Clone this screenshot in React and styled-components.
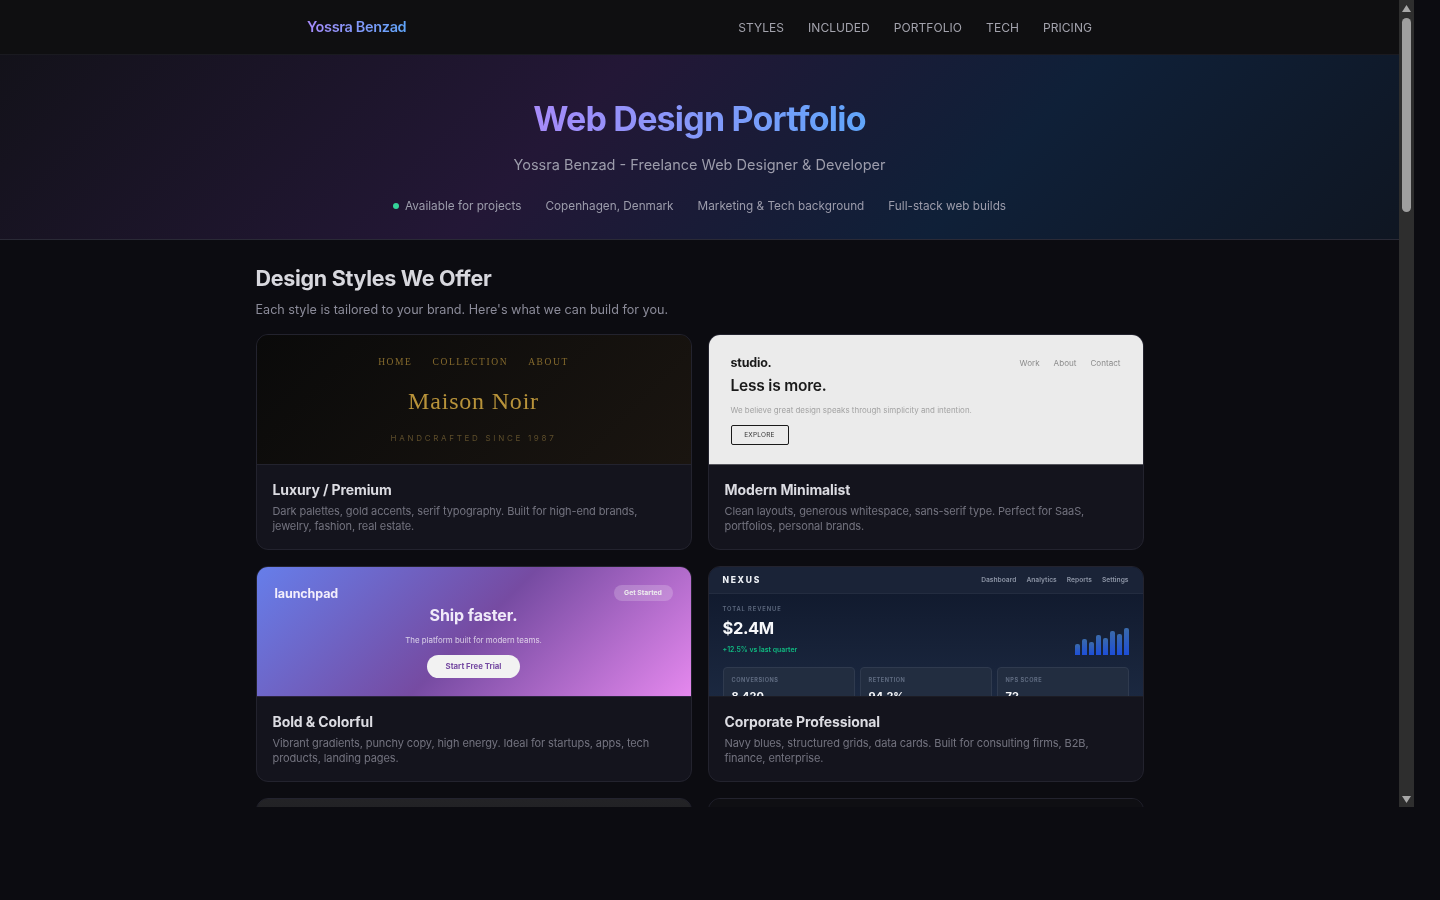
import React from "react";
import styled, { createGlobalStyle } from "styled-components";

const Global = createGlobalStyle`
  html, body { margin: 0; padding: 0; background: #0c0c11; height: 100%; overflow: hidden; }
  * { box-sizing: border-box; }
  body { font-family: "Inter", "Noto Sans", sans-serif; }
`;

const Frame = styled.div`
  width: 1414px;
  height: 807px;
  display: flex;
  background: #0c0c11;
`;
const Page = styled.div`
  flex: 1;
  min-width: 0;
  overflow: hidden;
  filter: blur(0.3px);
`;
const Scrollbar = styled.aside`
  width: 15px;
  display: flex;
  flex-direction: column;
  background: #2e2e2e;
`;
const ScrollArrow = styled.svg`
  display: block;
  width: 15px;
  height: 15px;
  flex: none;
  fill: #a8a8a8;
`;
const ScrollTrack = styled.div`
  flex: 1;
  padding: 3px 3px 0;
`;
const ScrollThumb = styled.div`
  height: 194px;
  border-radius: 5px;
  background: #9f9f9f;
`;

const Nav = styled.nav`
  height: 55px;
  background: #0f0f11;
  border-bottom: 1px solid #1a1a20;
  display: flex;
  justify-content: center;
`;
const NavInner = styled.div`
  width: 785px;
  display: flex;
  align-items: center;
  justify-content: space-between;
`;
const Logo = styled.span`
  margin-bottom: 2px;
  font-size: 14.5px;
  font-weight: 600;
  letter-spacing: -0.35px;
  background: linear-gradient(90deg, #a78bfa, #60a5fa);
  -webkit-background-clip: text;
  background-clip: text;
  color: transparent;
`;
const NavLinks = styled.div`
  display: flex;
  gap: 24px;
`;
const NavLink = styled.a`
  font-size: 12px;
  letter-spacing: 0.06px;
  color: #a3a3ad;
  text-transform: uppercase;
`;

const Hero = styled.header`
  height: 185px;
  padding-top: 43px;
  text-align: center;
  border-bottom: 1px solid #2a2a36;
  background: linear-gradient(135deg, #13121a 0%, #231736 40%, #0f2038 70%, #0f1622 100%);
`;
const Title = styled.h1`
  margin: 0;
  display: inline-block;
  font-size: 34px;
  line-height: 42px;
  font-weight: 700;
  letter-spacing: -0.8px;
  background: linear-gradient(90deg, #a78bfa, #60a5fa);
  -webkit-background-clip: text;
  background-clip: text;
  color: transparent;
`;
const Sub = styled.p`
  margin: 15px 0 0;
  font-size: 14.5px;
  line-height: 20px;
  color: #9c9cab;
`;
const Badges = styled.div`
  margin-top: 22px;
  display: flex;
  justify-content: center;
  gap: 24px;
`;
const Badge = styled.span`
  display: flex;
  align-items: center;
  gap: 6px;
  font-size: 11.75px;
  line-height: 18px;
  color: #9c9cab;
`;
const Dot = styled.i`
  width: 6px;
  height: 6px;
  border-radius: 50%;
  background: #34d399;
`;

const Main = styled.main`
  width: 888px;
  margin: 0 auto;
  padding: 23px 0 40px;
`;
const H2 = styled.h2`
  margin: 0;
  font-size: 21.5px;
  line-height: 30px;
  font-weight: 700;
  letter-spacing: -0.3px;
  color: #d8d8de;
`;
const Lead = styled.p`
  margin: 7px 0 14px;
  font-size: 12.6px;
  line-height: 20px;
  color: #8b8b99;
`;
const Grid = styled.div`
  display: grid;
  grid-template-columns: 1fr 1fr;
  gap: 16px;
`;
const Card = styled.article`
  height: 216px;
  border: 1px solid #23232e;
  border-radius: 12px;
  overflow: hidden;
  background: #14141d;
`;
const Preview = styled.div`
  height: 130px;
  overflow: hidden;
  border-bottom: 1px solid #23232e;
`;
const Info = styled.div`
  padding: 15px 15px 0 16px;
`;
const CardTitle = styled.h3`
  margin: 0;
  font-size: 14px;
  line-height: 20px;
  font-weight: 700;
  letter-spacing: -0.1px;
  color: #dcdce2;
`;
const CardDesc = styled.p`
  margin: 4px 0 0;
  font-size: 11px;
  line-height: 15px;
  letter-spacing: -0.11px;
  color: #73737f;
`;

/* Luxury */
const LuxPreview = styled(Preview)`
  background: linear-gradient(135deg, #0a0a0a, #1a1510);
  text-align: center;
  padding-top: 20px;
  font-family: "Liberation Serif", "DejaVu Serif", serif;
`;
const LuxNav = styled.div`
  display: flex;
  justify-content: center;
  gap: 20px;
  font-size: 9.5px;
  line-height: 14px;
  letter-spacing: 1.6px;
  color: #856a2d;
`;
const LuxTitle = styled.div`
  margin-top: 16px;
  font-size: 24px;
  line-height: 32px;
  letter-spacing: 0.8px;
  color: #b8933a;
`;
const LuxTag = styled.div`
  margin-top: 15px;
  font-family: "Inter", sans-serif;
  font-size: 8px;
  line-height: 12px;
  letter-spacing: 2.7px;
  color: #5e4e2b;
`;

/* Minimal */
const MinPreview = styled(Preview)`
  background: #ebebeb;
  padding: 20px 22px 0 22px;
  border-bottom-color: #55555c;
`;
const MinHead = styled.div`
  display: flex;
  justify-content: space-between;
  align-items: center;
`;
const MinLogo = styled.span`
  font-size: 12.5px;
  line-height: 16px;
  font-weight: 700;
  letter-spacing: -0.2px;
  color: #1a1a1a;
`;
const MinLinks = styled.span`
  display: flex;
  gap: 14px;
  font-size: 8.1px;
  color: #8c8c8c;
`;
const MinTitle = styled.div`
  margin-top: 5px;
  font-size: 15.5px;
  line-height: 20px;
  font-weight: 600;
  letter-spacing: -0.2px;
  color: #1a1a1a;
`;
const MinText = styled.p`
  margin: 8px 0 0;
  font-size: 7.95px;
  line-height: 12px;
  color: #a3a3a3;
`;
const MinBtn = styled.span`
  margin: 9px 0 0 0;
  display: flex;
  align-items: center;
  justify-content: center;
  width: 58px;
  height: 20px;
  border: 1.5px solid #1a1a1a;
  border-radius: 2px;
  font-size: 6.5px;
  letter-spacing: 0.2px;
  color: #333;
`;

/* Bold */
const BoldPreview = styled(Preview)`
  background: linear-gradient(135deg, #667eea 0%, #764ba2 50%, #e588ee 100%);
  padding: 18px 18px 0 18px;
  text-align: center;
  color: #fff;
  border-bottom-color: #2d2440;
`;
const BoldHead = styled.div`
  display: flex;
  justify-content: space-between;
  align-items: center;
`;
const BoldLogo = styled.span`
  font-size: 12.5px;
  font-weight: 700;
  letter-spacing: -0.1px;
  color: #f3eefc;
`;
const Pill = styled.span`
  width: 59px;
  height: 16px;
  border-radius: 8px;
  background: rgba(255, 255, 255, 0.2);
  font-size: 6.8px;
  line-height: 16px;
  font-weight: 700;
  color: #eee;
`;
const BoldTitle = styled.div`
  margin-top: 3px;
  font-size: 16px;
  line-height: 22px;
  font-weight: 700;
  letter-spacing: -0.1px;
  color: #f0eaf9;
`;
const BoldText = styled.p`
  margin: 8px 0 0;
  font-size: 7.9px;
  line-height: 12px;
  color: rgba(255, 255, 255, 0.72);
`;
const BoldBtn = styled.span`
  margin-top: 9px;
  display: inline-block;
  width: 93px;
  height: 23px;
  line-height: 23px;
  border-radius: 12px;
  background: #f2f2f2;
  font-size: 7.8px;
  font-weight: 700;
  color: #764ba2;
`;

/* Corporate */
const CorpPreview = styled(Preview)`
  background: linear-gradient(180deg, #0f172a, #1b2840);
  border-bottom-color: #1c1c24;
`;
const CorpBar = styled.div`
  height: 27px;
  padding: 0 14px;
  display: flex;
  align-items: center;
  justify-content: space-between;
  background: #1a2337;
  border-bottom: 1px solid #232c40;
`;
const CorpLogo = styled.span`
  font-size: 8.5px;
  font-weight: 800;
  letter-spacing: 1.7px;
  color: #eef1f6;
`;
const CorpLinks = styled.span`
  display: flex;
  gap: 10px;
  font-size: 6.7px;
  font-weight: 600;
  color: #8b93a4;
`;
const CorpBody = styled.div`
  padding: 10px 14px 0;
`;
const CorpRow = styled.div`
  display: flex;
  justify-content: space-between;
  align-items: flex-end;
`;
const CorpLabel = styled.div`
  font-size: 5.8px;
  line-height: 9px;
  font-weight: 600;
  letter-spacing: 0.9px;
  color: #5f6b80;
`;
const CorpValue = styled.div`
  margin-top: 3px;
  font-size: 16.5px;
  line-height: 24px;
  font-weight: 700;
  letter-spacing: -0.4px;
  color: #f7f8fa;
`;
const CorpDelta = styled.div`
  margin-top: 5px;
  font-size: 6.9px;
  line-height: 10px;
  font-weight: 600;
  color: #10b981;
`;
const Bars = styled.div`
  display: flex;
  align-items: flex-end;
  gap: 2px;
`;
const Bar = styled.i`
  width: 5px;
  height: ${(p) => p.$h}px;
  border-radius: 2px 2px 0 0;
  background: linear-gradient(180deg, #3a6aaa, #1d4ed8);
`;
const Stats = styled.div`
  margin-top: 12px;
  display: grid;
  grid-template-columns: repeat(3, 1fr);
  gap: 5px;
`;
const Stat = styled.div`
  height: 50px;
  padding: 8px 8px 0;
  background: #222d40;
  border: 1px solid #2f3a4e;
  border-radius: 4px;
`;
const StatLabel = styled.div`
  font-size: 5.6px;
  line-height: 9px;
  font-weight: 700;
  letter-spacing: 0.5px;
  color: #5f6b80;
`;
const StatValue = styled.div`
  margin-top: 3px;
  font-size: 11px;
  line-height: 16px;
  font-weight: 700;
  color: #f7f8fa;
`;

const DarkPreview = styled(Preview)`
  background: linear-gradient(180deg, #232326, #141416);
`;
const BlackPreview = styled(Preview)`
  background: #0f0f13;
`;

const links = ["Styles", "Included", "Portfolio", "Tech", "Pricing"];
const barHeights = [11, 16, 13, 20, 17, 24, 21, 27];
const stats = [
  ["CONVERSIONS", "8,420"],
  ["RETENTION", "94.2%"],
  ["NPS SCORE", "72"],
];

export default function App() {
  return (
    <>
      <Global />
      <Frame>
        <Page>
          <Nav>
            <NavInner>
              <Logo>Yossra Benzad</Logo>
              <NavLinks>
                {links.map((l) => (
                  <NavLink key={l}>{l}</NavLink>
                ))}
              </NavLinks>
            </NavInner>
          </Nav>
          <Hero>
            <Title>Web Design Portfolio</Title>
            <Sub>Yossra Benzad - Freelance Web Designer &amp; Developer</Sub>
            <Badges>
              <Badge><Dot />Available for projects</Badge>
              <Badge>Copenhagen, Denmark</Badge>
              <Badge>Marketing &amp; Tech background</Badge>
              <Badge>Full-stack web builds</Badge>
            </Badges>
          </Hero>
          <Main>
            <H2>Design Styles We Offer</H2>
            <Lead>Each style is tailored to your brand. Here's what we can build for you.</Lead>
            <Grid>
              <Card>
                <LuxPreview>
                  <LuxNav><span>HOME</span><span>COLLECTION</span><span>ABOUT</span></LuxNav>
                  <LuxTitle>Maison Noir</LuxTitle>
                  <LuxTag>HANDCRAFTED SINCE 1987</LuxTag>
                </LuxPreview>
                <Info>
                  <CardTitle>Luxury / Premium</CardTitle>
                  <CardDesc>Dark palettes, gold accents, serif typography. Built for high-end brands, jewelry, fashion, real estate.</CardDesc>
                </Info>
              </Card>
              <Card>
                <MinPreview>
                  <MinHead>
                    <MinLogo>studio.</MinLogo>
                    <MinLinks><span>Work</span><span>About</span><span>Contact</span></MinLinks>
                  </MinHead>
                  <MinTitle>Less is more.</MinTitle>
                  <MinText>We believe great design speaks through simplicity and intention.</MinText>
                  <MinBtn>EXPLORE</MinBtn>
                </MinPreview>
                <Info>
                  <CardTitle>Modern Minimalist</CardTitle>
                  <CardDesc>Clean layouts, generous whitespace, sans-serif type. Perfect for SaaS, portfolios, personal brands.</CardDesc>
                </Info>
              </Card>
              <Card>
                <BoldPreview>
                  <BoldHead>
                    <BoldLogo>launchpad</BoldLogo>
                    <Pill>Get Started</Pill>
                  </BoldHead>
                  <BoldTitle>Ship faster.</BoldTitle>
                  <BoldText>The platform built for modern teams.</BoldText>
                  <BoldBtn>Start Free Trial</BoldBtn>
                </BoldPreview>
                <Info>
                  <CardTitle>Bold &amp; Colorful</CardTitle>
                  <CardDesc>Vibrant gradients, punchy copy, high energy. Ideal for startups, apps, tech products, landing pages.</CardDesc>
                </Info>
              </Card>
              <Card>
                <CorpPreview>
                  <CorpBar>
                    <CorpLogo>NEXUS</CorpLogo>
                    <CorpLinks><span>Dashboard</span><span>Analytics</span><span>Reports</span><span>Settings</span></CorpLinks>
                  </CorpBar>
                  <CorpBody>
                    <CorpRow>
                      <div>
                        <CorpLabel>TOTAL REVENUE</CorpLabel>
                        <CorpValue>$2.4M</CorpValue>
                        <CorpDelta>+12.5% vs last quarter</CorpDelta>
                      </div>
                      <Bars>
                        {barHeights.map((h, i) => (
                          <Bar key={i} $h={h} />
                        ))}
                      </Bars>
                    </CorpRow>
                    <Stats>
                      {stats.map(([l, v]) => (
                        <Stat key={l}>
                          <StatLabel>{l}</StatLabel>
                          <StatValue>{v}</StatValue>
                        </Stat>
                      ))}
                    </Stats>
                  </CorpBody>
                </CorpPreview>
                <Info>
                  <CardTitle>Corporate Professional</CardTitle>
                  <CardDesc>Navy blues, structured grids, data cards. Built for consulting firms, B2B, finance, enterprise.</CardDesc>
                </Info>
              </Card>
              <Card><DarkPreview /></Card>
              <Card><BlackPreview /></Card>
            </Grid>
          </Main>
        </Page>
        <Scrollbar>
          <ScrollArrow viewBox="0 0 15 15"><path d="M7.5 5 12 12H3z" /></ScrollArrow>
          <ScrollTrack><ScrollThumb /></ScrollTrack>
          <ScrollArrow viewBox="0 0 15 15"><path d="M3 4h9l-4.5 7z" /></ScrollArrow>
        </Scrollbar>
      </Frame>
    </>
  );
}
